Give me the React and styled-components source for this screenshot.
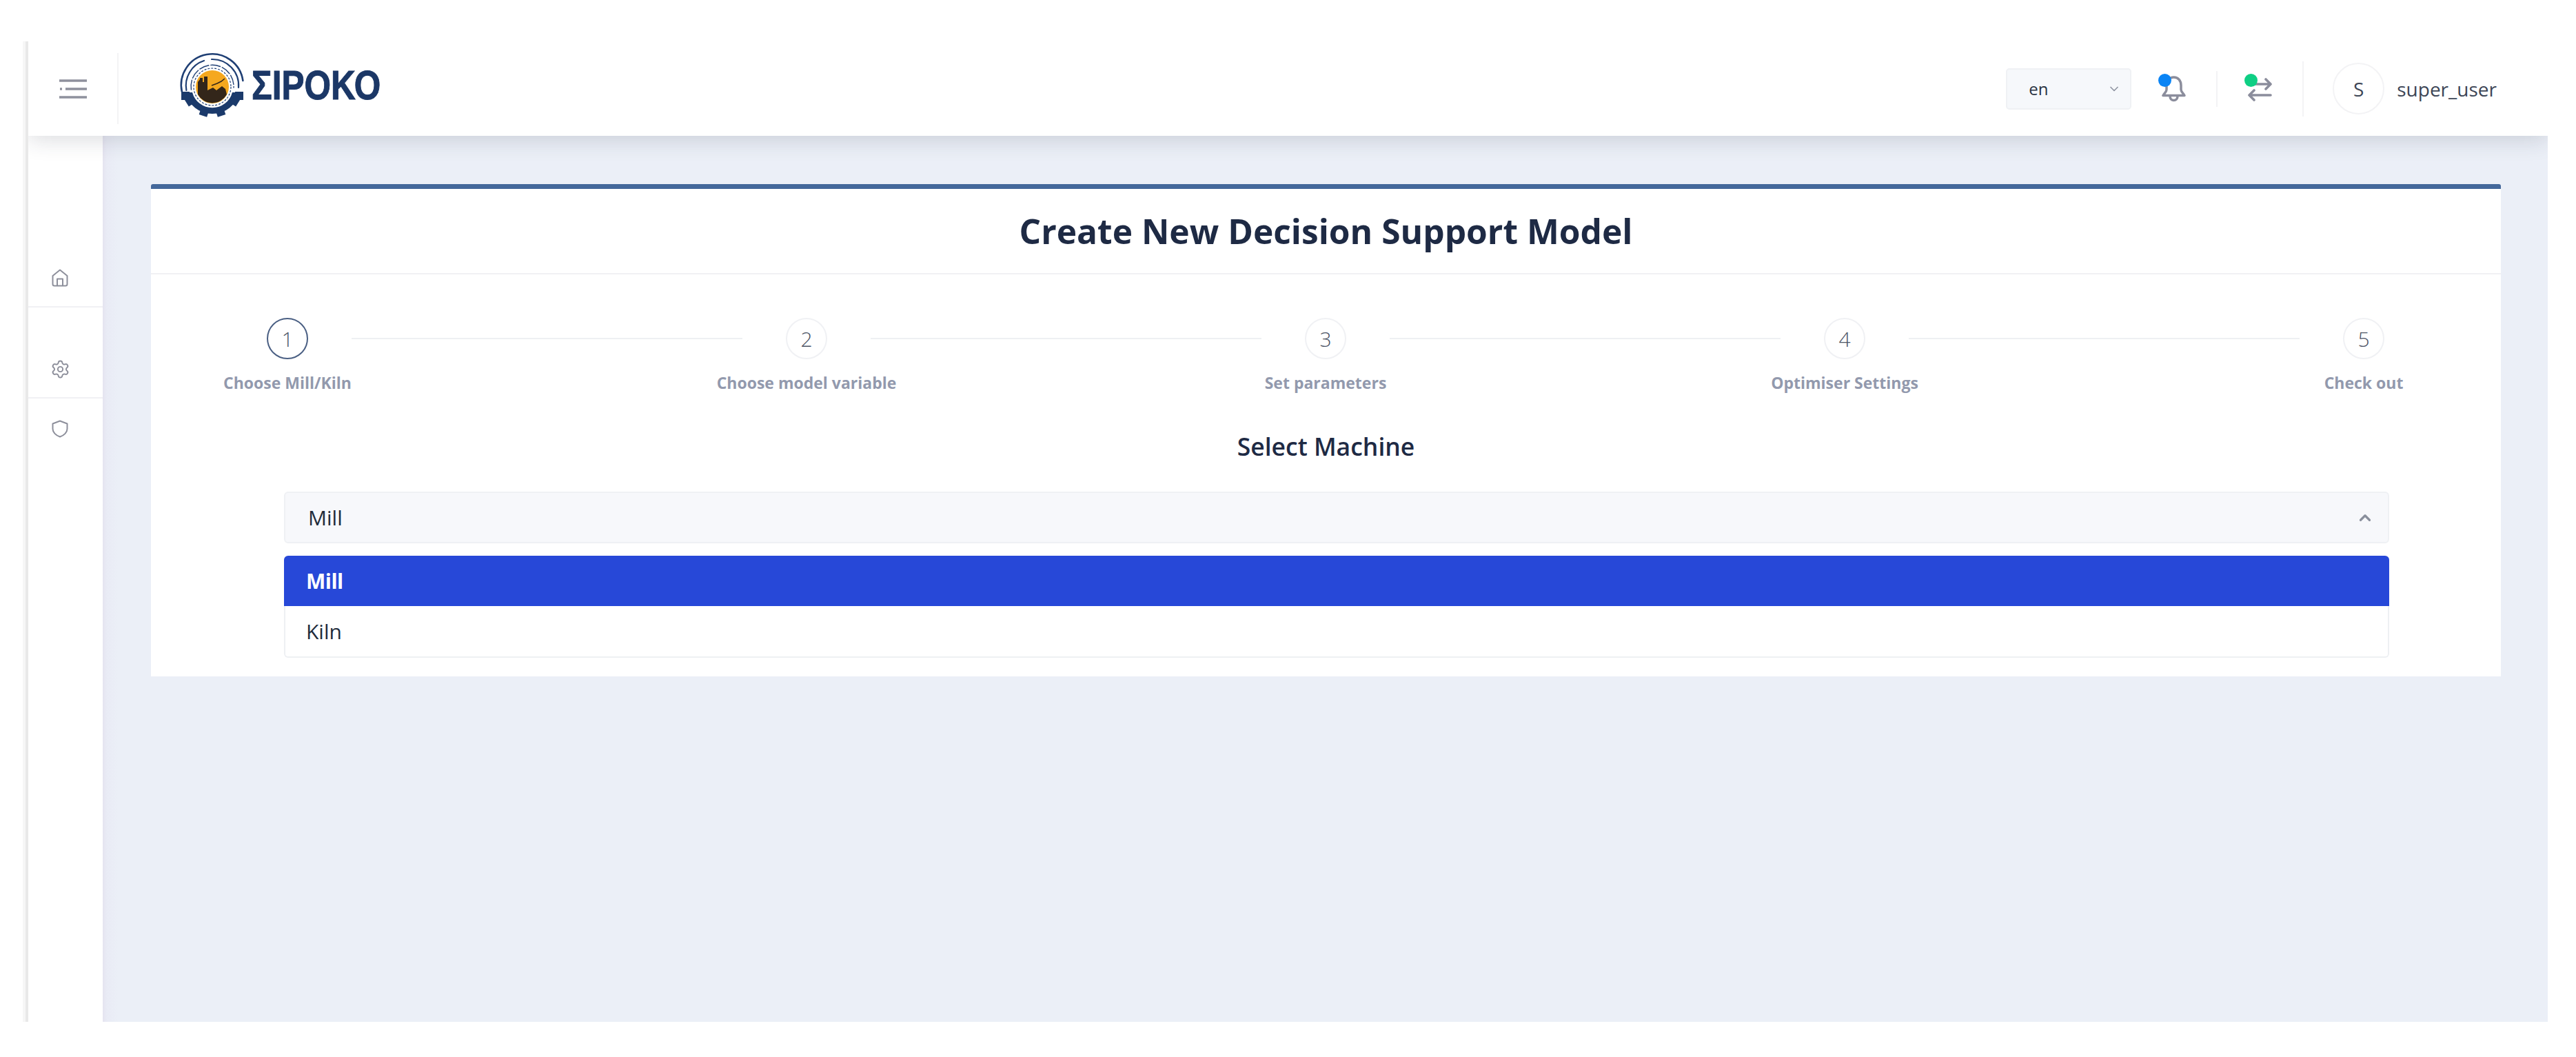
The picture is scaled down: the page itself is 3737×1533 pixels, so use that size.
import { Fragment } from "react";
import styled, { createGlobalStyle } from "styled-components";
import { ChevronDown, ChevronUp, Settings } from "lucide-react";

const GlobalStyle = createGlobalStyle`
  html, body {
    margin: 0;
    padding: 0;
    background: #ffffff;
  }
  body {
    font-family: "Open Sans", "Noto Sans", sans-serif;
    color: #212b3a;
  }
  * {
    box-sizing: border-box;
  }
`;

const Shell = styled.div`
  margin: 60px 41px 0 33px;
  height: 1422px;
  padding-left: 8px;
  display: flex;
  flex-direction: column;
  background: linear-gradient(90deg, #f6f6f6 4px, #e9e9e9 4px, #e9e9e9 8px, #ffffff 8px);
`;

const Header = styled.header`
  height: 137px;
  display: flex;
  align-items: center;
  background: #ffffff;
  position: relative;
  z-index: 2;
  box-shadow: 0 6px 30px rgba(40, 44, 60, 0.16);
  clip-path: inset(0 0 -90px 0);
`;

const MenuCell = styled.div`
  width: 131px;
  height: 103px;
  display: flex;
  align-items: center;
  justify-content: center;
  border-right: 2px solid #f3f3f5;
  flex-shrink: 0;
`;

const Brand = styled.div`
  margin: 0 0 9px 83px;
  display: flex;
  align-items: center;
  gap: 0;
`;

const BrandName = styled.span`
  display: inline-block;
  font-family: "Liberation Sans", sans-serif;
  font-weight: 700;
  font-size: 59px;
  line-height: 59px;
  color: #1b3766;
  -webkit-text-stroke: 1px #1b3766;
  transform: scaleX(0.84);
  transform-origin: left center;
`;

const HeaderRight = styled.div`
  margin-left: auto;
  padding-right: 74px;
  display: flex;
  align-items: center;
  gap: 44px;
`;

const LangSelect = styled.div`
  width: 182px;
  height: 60px;
  padding: 0 13px 0 31px;
  display: flex;
  align-items: center;
  justify-content: space-between;
  background: #f6f8fb;
  border: 2px solid #eff1f4;
  border-radius: 5px;
  font-size: 24px;
  font-weight: 500;
  color: #2a3342;
  svg {
    color: #8f94a2;
  }
`;

const IconWrap = styled.div`
  position: relative;
  width: 35px;
  height: 38px;
  color: #8b8d9c;
  svg {
    display: block;
  }
`;

const Dot = styled.span`
  position: absolute;
  left: -5px;
  top: -3px;
  width: 19px;
  height: 19px;
  border-radius: 50%;
  background: ${(p) => p.$color};
`;

const VLine = styled.div`
  width: 2px;
  height: ${(p) => p.$height}px;
  background: #f3f3f5;
`;

const UserBox = styled.div`
  display: flex;
  align-items: center;
  gap: 18px;
  margin-left: -2px;
`;

const Avatar = styled.div`
  width: 75px;
  height: 75px;
  border-radius: 50%;
  border: 2px solid #f3f3f5;
  display: flex;
  align-items: center;
  justify-content: center;
  font-size: 28px;
  color: #3d4656;
`;

const UserName = styled.span`
  font-size: 28px;
  color: #3d4656;
`;

const Body = styled.div`
  flex: 1;
  display: flex;
  min-height: 0;
`;

const Sidebar = styled.nav`
  width: 108px;
  padding-top: 165px;
  background: #ffffff;
  flex-shrink: 0;
`;

const NavItem = styled.div`
  height: ${(p) => (p.$plain ? 88 : 84)}px;
  margin-top: ${(p) => p.$gap || 0}px;
  display: flex;
  align-items: center;
  justify-content: center;
  padding-right: 16px;
  color: #8d8f9b;
  border-bottom: ${(p) => (p.$plain ? "none" : "2px solid #f1f1f4")};
`;

const Content = styled.main`
  flex: 1;
  padding: 70px 68px 0 70px;
  background: linear-gradient(90deg, #e5e4f0 0, #e9ebf5 6px, #ebeff7 22px);
`;

const Card = styled.section`
  background: #ffffff;
  border-top: 7px solid #44689b;
  border-radius: 3px 3px 0 0;
  padding-bottom: 193px;
`;

const CardTitle = styled.h1`
  margin: 0;
  height: 124px;
  display: flex;
  align-items: center;
  justify-content: center;
  border-bottom: 2px solid #f1f1f4;
  font-size: 49.7px;
  font-weight: 700;
  color: #1e2a44;
`;

const Stepper = styled.div`
  margin-top: 63px;
  padding: 0 169px 0 168px;
  display: flex;
  align-items: flex-start;
`;

const Step = styled.div`
  width: 60px;
  flex-shrink: 0;
  display: flex;
  flex-direction: column;
  align-items: center;
`;

const StepCircle = styled.div`
  width: 60px;
  height: 60px;
  border-radius: 50%;
  border: 2px solid ${(p) => (p.$active ? "#4a5f83" : "#f0f1f4")};
  display: flex;
  align-items: center;
  justify-content: center;
  font-size: 30px;
  font-weight: 300;
  color: #4d5566;
`;

const StepLabel = styled.div`
  margin-top: 21px;
  line-height: 26px;
  font-size: 23px;
  font-weight: 700;
  white-space: nowrap;
  color: #9299ad;
`;

const StepLine = styled.div`
  flex: 1;
  height: 2px;
  margin: 29px 63px 0;
  background: #eef0f3;
`;

const SectionTitle = styled.h2`
  margin: 57px 0 0;
  line-height: 44px;
  text-align: center;
  font-size: 35.5px;
  font-weight: 600;
  color: #1e2a44;
`;

const Field = styled.div`
  position: relative;
  margin: 44px 162px 0 193px;
`;

const SelectBox = styled.div`
  height: 75px;
  padding: 0 20px 0 33px;
  display: flex;
  align-items: center;
  justify-content: space-between;
  background: #f7f8fb;
  border: 2px solid #eff1f4;
  border-radius: 6px;
  font-size: 30px;
  font-weight: 500;
  svg {
    color: #8a8f9c;
  }
`;

const Options = styled.ul`
  position: absolute;
  left: 0;
  right: 0;
  top: 93px;
  margin: 0;
  padding: 0;
  list-style: none;
  background: #ffffff;
  border: 2px solid #eef0f3;
  border-top: none;
  border-radius: 6px;
`;

const Option = styled.li`
  height: 73px;
  margin: ${(p) => (p.$selected ? "0 -2px" : "0")};
  padding-left: ${(p) => (p.$selected ? 32 : 30)}px;
  display: flex;
  align-items: center;
  font-size: 30px;
  font-weight: ${(p) => (p.$selected ? 700 : 500)};
  letter-spacing: ${(p) => (p.$selected ? "-0.5px" : "0")};
  color: ${(p) => (p.$selected ? "#ffffff" : "#212b3a")};
  background: ${(p) => (p.$selected ? "#2748d8" : "transparent")};
  border-radius: ${(p) => (p.$selected ? "6px 6px 0 0" : "0")};
`;

function MenuIcon() {
  return (
    <svg width="42" height="28" viewBox="0 0 42 28" fill="none" stroke="#8f919d" strokeWidth="3.4">
      <path d="M1 2h40M10 14h31M1 26h40" />
      <path d="M2 14h3" />
    </svg>
  );
}

function LogoMark() {
  const teeth = [-58, -18, 18, 58];
  return (
    <svg width="110" height="110" viewBox="0 0 110 110">
      <g fill="none" stroke="#1f3f74" strokeLinecap="round">
        <path d="M8.9 64A45 45 0 1 1 97.4 48" strokeWidth="2.6" />
        <path d="M15.4 62A38 38 0 0 1 41 19M52 17A38 38 0 0 1 91 58" strokeWidth="2.2" />
        <path d="M22.4 61A31 31 0 1 1 84 58" strokeWidth="1.4" strokeDasharray="14 3" />
      </g>
      <g fill="#1b3a6b">
        <path d="M14 65H24A30 30 0 0 0 82 65H92A40 40 0 0 1 14 65Z" />
        {teeth.map((a) => (
          <rect key={a} x="47" y="91" width="12" height="10" transform={`rotate(${a} 53 57)`} />
        ))}
        <rect x="8" y="64" width="12" height="12" />
        <rect x="86" y="64" width="12" height="12" />
      </g>
      <circle cx="53" cy="57" r="27" fill="#ffffff" stroke="#1f3f74" strokeWidth="1.2" strokeDasharray="3 2" />
      <circle cx="53" cy="57" r="24" fill="#f5a81f" />
      <path
        d="M32 68V50L35 46V44H39V50H41V42H46V62L54 58L59 62L67 56L72 60L74 68A24 24 0 0 1 32 68Z"
        fill="#33261a"
      />
      <path d="M52 55L60 52L66 49L71 45" stroke="#33261a" strokeWidth="1.6" fill="none" />
    </svg>
  );
}

function BellIcon() {
  return (
    <svg width="35" height="38" viewBox="0 0 35 38" fill="none" stroke="currentColor" strokeWidth="3.5" strokeLinejoin="round">
      <path d="M17.5 2C11 2 7 7 7 14V20C7 23 4 25 2 28.5H33C31 25 28 23 28 20V14C28 7 24 2 17.5 2Z" />
      <path d="M12 29.5C12 37.5 23 37.5 23 29.5" />
    </svg>
  );
}

function SwapIcon() {
  return (
    <svg width="35" height="38" viewBox="0 0 35 38" fill="none" stroke="currentColor" strokeWidth="3.6" strokeLinecap="round" strokeLinejoin="round">
      <path d="M6 12H33M26 5L33 12L26 19" />
      <path d="M33 28H2M9 21L2 28L9 35" />
    </svg>
  );
}

function HomeIcon() {
  return (
    <svg width="24" height="26" viewBox="0 0 24 26" fill="none" stroke="currentColor" strokeWidth="2" strokeLinejoin="round">
      <path d="M12 1.5L22.5 10V22a2.5 2.5 0 0 1-2.5 2.5H4A2.5 2.5 0 0 1 1.5 22V10Z" />
      <path d="M8 24V14.5h8V24" />
    </svg>
  );
}

function ShieldIcon() {
  return (
    <svg width="24" height="26" viewBox="0 0 24 26" fill="none" stroke="currentColor" strokeWidth="2" strokeLinejoin="round">
      <path d="M12 1.5L22.5 5.5V13C22.5 18 18 22.5 12 24.5C6 22.5 1.5 18 1.5 13V5.5Z" />
    </svg>
  );
}

const steps = ["Choose Mill/Kiln", "Choose model variable", "Set parameters", "Optimiser Settings", "Check out"];

export default function App() {
  return (
    <>
      <GlobalStyle />
      <Shell>
        <Header>
          <MenuCell>
            <MenuIcon />
          </MenuCell>
          <Brand>
            <LogoMark />
            <BrandName>ΣΙΡΟΚΟ</BrandName>
          </Brand>
          <HeaderRight>
            <LangSelect>
              en
              <ChevronDown size={20} strokeWidth={2} />
            </LangSelect>
            <IconWrap>
              <BellIcon />
              <Dot $color="#0a84f5" />
            </IconWrap>
            <VLine $height={52} />
            <IconWrap>
              <SwapIcon />
              <Dot $color="#0fcf84" />
            </IconWrap>
            <VLine $height={80} />
            <UserBox>
              <Avatar>S</Avatar>
              <UserName>super_user</UserName>
            </UserBox>
          </HeaderRight>
        </Header>
        <Body>
          <Sidebar>
            <NavItem>
              <HomeIcon />
            </NavItem>
            <NavItem $gap={48}>
              <Settings size={29} strokeWidth={1.6} />
            </NavItem>
            <NavItem $plain>
              <ShieldIcon />
            </NavItem>
          </Sidebar>
          <Content>
            <Card>
              <CardTitle>Create New Decision Support Model</CardTitle>
              <Stepper>
                {steps.map((label, i) => (
                  <Fragment key={label}>
                    {i > 0 && <StepLine />}
                    <Step>
                      <StepCircle $active={i === 0}>{i + 1}</StepCircle>
                      <StepLabel>{label}</StepLabel>
                    </Step>
                  </Fragment>
                ))}
              </Stepper>
              <SectionTitle>Select Machine</SectionTitle>
              <Field>
                <SelectBox>
                  Mill
                  <ChevronUp size={26} strokeWidth={3} />
                </SelectBox>
                <Options>
                  <Option $selected>Mill</Option>
                  <Option>Kiln</Option>
                </Options>
              </Field>
            </Card>
          </Content>
        </Body>
      </Shell>
    </>
  );
}
